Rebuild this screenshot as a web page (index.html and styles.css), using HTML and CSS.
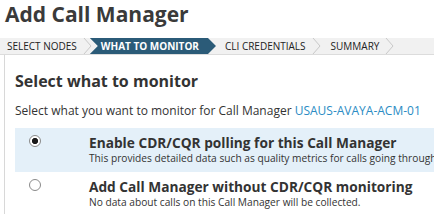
FILE: index.html
```html
<!DOCTYPE html>
<html lang="en">
<head>
    <meta charset="UTF-8">
    <title>Add Call Manager</title>
    <link rel="stylesheet" href="styles.css">
</head>
<body>

<h1 class="page-title">Add Call Manager</h1>

<div class="steps">
    <div class="step">SELECT NODES</div>
    <svg class="chevron" width="10" height="16" viewBox="0 0 10 16"><polyline points="1,0 8,8 1,16" fill="none" stroke="#c8c8c8" stroke-width="1"/></svg>
    <div class="step active">WHAT TO MONITOR</div>
    <div class="step">CLI CREDENTIALS</div>
    <svg class="chevron" width="10" height="16" viewBox="0 0 10 16"><polyline points="1,0 8,8 1,16" fill="none" stroke="#c8c8c8" stroke-width="1"/></svg>
    <div class="step">SUMMARY</div>
    <svg class="chevron" width="10" height="16" viewBox="0 0 10 16"><polyline points="1,0 8,8 1,16" fill="none" stroke="#c8c8c8" stroke-width="1"/></svg>
</div>

<div class="panel">
    <h2 class="section-title">Select what to monitor</h2>
    <p class="intro">Select what you want to monitor for Call Manager <a href="#" class="node-link">USAUS-AVAYA-ACM-01</a></p>

    <label class="option selected">
        <input type="radio" name="monitor" class="radio" checked>
        <span class="option-text">
            <span class="option-title">Enable CDR/CQR polling for this Call Manager</span>
            <span class="option-desc">This provides detailed data such as quality metrics for calls going through this Call Manager.</span>
        </span>
    </label>

    <label class="option">
        <input type="radio" name="monitor" class="radio">
        <span class="option-text">
            <span class="option-title">Add Call Manager without CDR/CQR monitoring</span>
            <span class="option-desc">No data about calls on this Call Manager will be collected.</span>
        </span>
    </label>
</div>

</body>
</html>
```

FILE: styles.css
```css
html, body {
    height: 214px;
    overflow: hidden;
}

body {
    margin: 0;
    padding: 0 0 0 4px;
    font-family: 'Open Sans', sans-serif;
    color: #333333;
    background-color: #ffffff;
    white-space: nowrap;
}

.page-title {
    margin: 0;
    padding: 1px 0 0 1px;
    font-size: 21px;
    font-weight: bold;
    line-height: 27px;
    color: #3a3a3a;
}

/* Barra de passos */
.steps {
    display: flex;
    align-items: center;
    height: 16px;
    margin-top: 10px;
    margin-left: -4px;
    padding-left: 4px;
    background-color: #f1f1f1;
    border-bottom: 1px solid #dcdcdc;
}

.step {
    font-size: 10px;
    line-height: 16px;
    padding: 0 6px 0 3px;
    color: #222222;
}

.chevron {
    flex-shrink: 0;
    margin-right: 6px;
}

.step.active {
    background-color: #2b5b78;
    color: #ffffff;
    font-weight: bold;
    margin-left: -9px;
    margin-right: 6px;
    padding: 0 17px 0 11px;
    clip-path: polygon(0 0, calc(100% - 8px) 0, 100% 50%, calc(100% - 8px) 100%, 0 100%, 8px 50%);
}

.panel {
    border-left: 1px solid #d8d8d8;
    padding-left: 10px;
    height: 170px;
}

.section-title {
    margin: 0;
    padding-top: 15px;
    font-size: 16px;
    font-weight: bold;
    line-height: 23px;
    color: #333333;
}

.intro {
    margin: 10px 0 9px;
    font-size: 12px;
    line-height: 16px;
    color: #333333;
}

.node-link {
    color: #2b8cc4;
    text-decoration: none;
}

.option {
    display: flex;
    align-items: flex-start;
    padding: 6px 0 7px 14px;
}

.option.selected {
    background-color: #e4f0f9;
}

.radio {
    appearance: none;
    -webkit-appearance: none;
    flex-shrink: 0;
    box-sizing: border-box;
    margin: 1px 48px 0 0;
    width: 12px;
    height: 12px;
    border: 1px solid #8a8a8a;
    border-radius: 50%;
    background-color: #ffffff;
}

.radio:checked {
    background: radial-gradient(circle, #1a1a1a 0 2.8px, #ffffff 3.3px);
}

.option-text {
    display: flex;
    flex-direction: column;
}

.option-title {
    font-size: 13.7px;
    font-weight: bold;
    line-height: 17px;
    color: #333333;
}

.option-desc {
    font-size: 10.2px;
    line-height: 14px;
    color: #333333;
}
```
